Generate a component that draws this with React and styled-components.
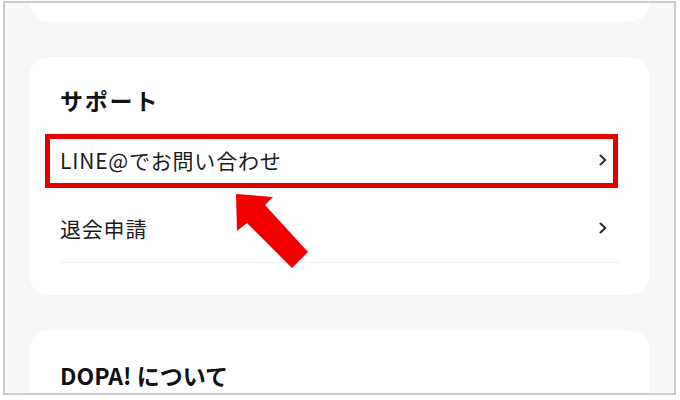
import React from "react";
import styled, { createGlobalStyle } from "styled-components";

const Global = createGlobalStyle`
  html, body { margin: 0; padding: 0; background: #ffffff; }
  body { font-family: "Noto Sans CJK JP", "Noto Sans", sans-serif; color: #111; }
`;

const Frame = styled.div`
  box-sizing: border-box;
  margin: 1px 0 0 3px;
  width: 673px;
  height: 394px;
  border: 2px solid #cbcbcb;
  background: #f8f8f8;
  overflow: hidden;
`;

const Column = styled.div`
  display: flex;
  flex-direction: column;
  gap: 35px;
  padding: 0 24px;
  margin-top: -41px;
`;

const Card = styled.section`
  position: relative;
  background: #ffffff;
  border-radius: 20px;
  box-shadow: 0 0 2px rgba(0, 0, 0, 0.04);
  padding: ${(p) => p.$pad || "27px 30px 32px 31px"};
  min-height: ${(p) => p.$h || 0}px;
  box-sizing: border-box;
`;

const Title = styled.h2`
  margin: 0 0 10px;
  font-size: 23px;
  line-height: 32px;
  font-weight: 700;
  color: #111;
  letter-spacing: ${(p) => p.$spacing || 0}px;
`;

const Row = styled.div`
  position: relative;
  height: 68px;
  display: flex;
  align-items: center;
  justify-content: space-between;
  padding-right: 13px;
  border-bottom: ${(p) => (p.$divider ? "1px solid #efefef" : "none")};
`;

const RowLabel = styled.span`
  font-size: 21px;
  color: #1a1a1a;
  letter-spacing: 0.8px;
`;

const Highlight = styled.div`
  position: absolute;
  left: -15px;
  top: 8px;
  width: 573px;
  height: 54px;
  box-sizing: border-box;
  border: 5px solid #e50000;
  pointer-events: none;
`;

const Arrow = styled.svg`
  position: absolute;
  left: 201px;
  top: 133px;
`;

const Chevron = () => (
  <svg width="8" height="12" viewBox="0 0 8 12">
    <path d="M1.5 1.5 L6.3 6 L1.5 10.5" fill="none" stroke="#2a2a2a" strokeWidth="2" strokeLinecap="round" strokeLinejoin="round" />
  </svg>
);

export default function App() {
  return (
    <>
      <Global />
      <Frame>
        <Column>
          <Card $h={60} $pad="0" />
          <Card>
            <Title $spacing={1.8}>サポート</Title>
            <Row>
              <RowLabel>LINE@でお問い合わせ</RowLabel>
              <Chevron />
              <Highlight />
            </Row>
            <Row $divider>
              <RowLabel>退会申請</RowLabel>
              <Chevron />
            </Row>
            <Arrow width="85" height="82" viewBox="0 0 85 82">
              <polygon points="6,4 43,7 35,15 78,62 62,78 17,33 7,41" fill="#f20000" />
            </Arrow>
          </Card>
          <Card $h={120} $pad="29px 30px 0 31px">
            <Title>DOPA! について</Title>
          </Card>
        </Column>
      </Frame>
    </>
  );
}
